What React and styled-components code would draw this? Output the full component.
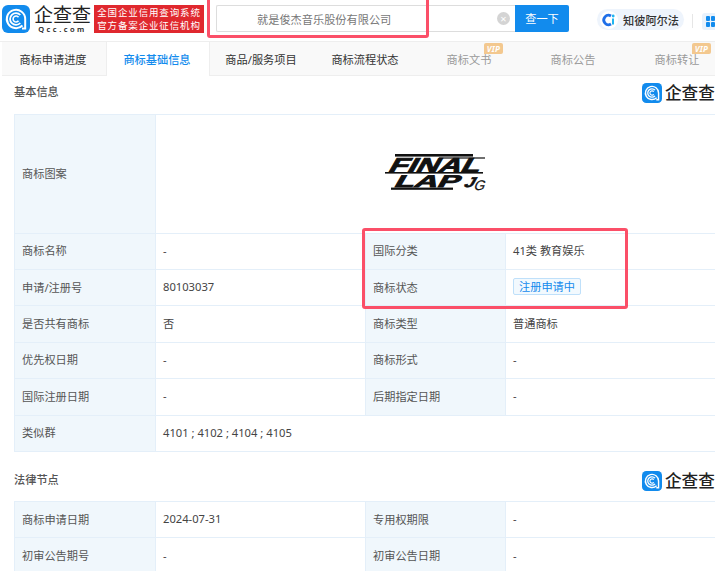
import React from "react";
import styled, { createGlobalStyle } from "styled-components";

const Global = createGlobalStyle`
  html, body {
    margin: 0;
    padding: 0;
    background: #fff;
    font-family: "Noto Sans", "Noto Sans CJK SC", sans-serif;
    font-size: 11.2px;
    color: #333;
  }
`;

const Page = styled.div`
  position: relative;
  width: 715px;
  height: 571px;
  overflow: hidden;
  background: #fff;
`;

const Header = styled.header`
  height: 42px;
  display: flex;
  align-items: flex-start;
  box-sizing: border-box;
  padding: 5px 0 0 2px;
  background: #fff;
  border-bottom: 1px solid #eee;
`;

const Brand = styled.div`
  flex: none;
  display: flex;
  align-items: center;
  gap: 4px;
  width: 92px;
`;

const BrandWords = styled.div`
  display: flex;
  flex-direction: column;
  align-items: center;
`;

const BrandName = styled.span`
  font-size: ${(p) => p.$size || 19}px;
  line-height: ${(p) => (p.$size ? p.$size + 3 : 20)}px;
  color: #222;
  white-space: nowrap;
`;

const BrandSite = styled.span`
  font-size: 7.5px;
  line-height: 8px;
  letter-spacing: 2.5px;
  color: #222;
  font-weight: 600;
`;

const RedTag = styled.div`
  flex: none;
  width: 110px;
  height: 28px;
  box-sizing: border-box;
  padding-top: 1px;
  background: #e0282e;
  color: #fff;
  font-size: 9.5px;
  line-height: 13px;
  text-align: center;
  letter-spacing: 0.85px;
  white-space: nowrap;
`;

const Search = styled.div`
  flex: none;
  margin-left: 12px;
  display: flex;
  height: 27px;
  width: 353px;
`;

const SearchInput = styled.div`
  width: 299px;
  box-sizing: border-box;
  display: flex;
  align-items: center;
  justify-content: space-between;
  padding: 0 5px 0 40px;
  border: 1px solid #ddd;
  border-right: none;
  border-radius: 2px 0 0 2px;
  color: #777;
`;

const ClearIcon = styled.span`
  width: 13px;
  height: 13px;
  border-radius: 50%;
  background: #d4d4d4;
  color: #fff;
  font-size: 11px;
  line-height: 13px;
  text-align: center;
`;

const SearchButton = styled.div`
  width: 54px;
  background: #128bed;
  color: #fff;
  line-height: 27px;
  text-align: center;
  border-radius: 0 2px 2px 0;
`;

const AiPill = styled.div`
  margin: 4px 0 0 28px;
  width: 87px;
  height: 21px;
  flex: none;
  box-sizing: border-box;
  display: flex;
  align-items: center;
  gap: 5px;
  padding-left: 3px;
  border-radius: 11px;
  background: #eef4fc;
  color: #333;
  font-weight: 500;
`;

const Divider = styled.span`
  flex: none;
  width: 1px;
  height: 14px;
  margin: 9px 0 0 8px;
  background: #e6e6e6;
`;

const AppButton = styled.span`
  flex: none;
  width: 24px;
  height: 17px;
  margin: 8px 0 0 9px;
  box-sizing: border-box;
  padding: 3px 4px;
  border-radius: 3px;
  background: #e8f2fc;
  display: grid;
  grid-template-columns: repeat(2, 4px);
  grid-auto-rows: 5px;
  gap: 1px;
`;

const AppCell = styled.i`
  display: block;
  background: #128bed;
  border-radius: 1px;
`;

const Tabs = styled.nav`
  height: 34px;
  margin-left: 2px;
  display: flex;
  width: 740px;
  background: #f9f9f9;
  box-sizing: border-box;
  border-bottom: 1px solid #eee;
`;

const Tab = styled.div`
  position: relative;
  flex: none;
  width: 104px;
  height: ${(p) => (p.$active ? 34 : 33)}px;
  padding-right: 2px;
  line-height: 36px;
  text-align: center;
  box-sizing: border-box;
  background: ${(p) => (p.$active ? "#fff" : "transparent")};
  color: ${(p) => (p.$active ? "#128bed" : p.$off ? "#999" : "#333")};
  font-weight: ${(p) => (p.$active ? 500 : 400)};
  border-left: ${(p) => (p.$active ? "1px solid #eee" : "none")};
  border-right: ${(p) => (p.$active ? "1px solid #eee" : "none")};
`;

const VipTag = styled.span`
  position: absolute;
  left: 66px;
  top: 1px;
  width: 19px;
  height: 11px;
  border-radius: 2px 2px 2px 0;
  background: #f3c88f;
  color: #fff;
  font-size: 8px;
  line-height: 11px;
  font-weight: 700;
  font-style: italic;
  letter-spacing: 0.3px;
`;

const Content = styled.main`
  padding-left: 14px;
`;

const SectionHead = styled.div`
  display: flex;
  justify-content: space-between;
  align-items: flex-start;
  width: 701px;
  height: ${(p) => p.$height}px;
  padding-top: ${(p) => p.$top}px;
  box-sizing: border-box;
  font-weight: 500;
  color: #555;
`;

const Stamp = styled.div`
  display: flex;
  align-items: center;
  gap: 3px;
  width: 73px;
  height: 20px;
  flex: none;
`;

const Table = styled.table`
  border-collapse: collapse;
  table-layout: fixed;
  width: 740px;
`;

const Row = styled.tr`
  height: ${(p) => p.$height || 36.4}px;
`;

const Label = styled.td`
  box-sizing: border-box;
  padding: 0 0 2px 7px;
  background: #f0f7fc;
  border: 1px solid #e4eff9;
  color: #555;
`;

const Value = styled.td`
  box-sizing: border-box;
  padding: 0 0 2px 7px;
  border: 1px solid #e4eff9;
  color: #444;
`;

const MarkCell = styled(Value)`
  padding: 0 0 0 225px;
`;

const StatusTag = styled.span`
  display: inline-block;
  height: 17px;
  line-height: 15px;
  box-sizing: border-box;
  padding: 0 5px;
  border: 1px solid #bfe0fa;
  border-radius: 2px;
  background: #f2f9fe;
  color: #128bed;
`;

const Highlight = styled.div`
  position: absolute;
  left: ${(p) => p.$left}px;
  top: ${(p) => p.$top}px;
  width: ${(p) => p.$width}px;
  height: ${(p) => p.$height}px;
  box-sizing: border-box;
  border: 3px solid #fb4f68;
  border-radius: 3px;
  pointer-events: none;
`;

const QccIcon = ({ size }) => (
  <svg width={size} height={size} viewBox="0 0 28 28" style={{ flex: "none" }}>
    <rect width="28" height="28" rx="6" fill="#128bed" />
    <path d="M20.5 20.5A9.2 9.2 0 1 1 23.2 14V23.5H20" fill="none" stroke="#fff" strokeWidth="2" />
    <path d="M18.3 18A5.9 5.9 0 1 1 18.3 10" fill="none" stroke="#fff" strokeWidth="1.8" />
    <path d="M16.5 15.8A3 3 0 1 1 16.5 12.2" fill="none" stroke="#fff" strokeWidth="1.6" />
  </svg>
);

const AiIcon = () => (
  <svg width="18" height="18" viewBox="0 0 18 18" style={{ flex: "none" }}>
    <circle cx="9" cy="9" r="9" fill="#fff" />
    <path d="M11 5A4.7 4.7 0 1 0 11 13" fill="none" stroke="#1f6fe8" strokeWidth="2.8" />
    <rect x="12" y="7.5" width="2" height="6" fill="#1fb4f0" />
    <circle cx="13.2" cy="5" r="1.4" fill="#1fb4f0" />
  </svg>
);

// the trademark image: wide racing letters with speed bars
const FinalLapMark = () => (
  <svg width="110" height="46" viewBox="0 0 110 46" style={{ display: "block" }}>
    <g fill="#111">
      <rect x="14" y="3" width="78" height="2.6" />
      <rect x="58" y="6.4" width="46" height="1.2" />
      <rect x="4" y="21" width="98" height="1.6" />
      <rect x="10" y="36.6" width="62" height="2.2" />
    </g>
    <g fontFamily="Liberation Sans, sans-serif" fontWeight="700" fill="#111" stroke="#111">
      <text transform="translate(6 20.5) skewX(-30) scale(1.55 1)" fontSize="20" strokeWidth="0.8">FINAL</text>
      <text transform="translate(12 35.5) skewX(-30) scale(1.9 1)" fontSize="17" strokeWidth="0.8">LAP</text>
      <text transform="translate(82 36) skewX(-30) scale(1.3 1)" fontSize="14" strokeWidth="0.5">J</text>
      <text transform="translate(92 39) skewX(-20)" fontSize="14" fontWeight="400" strokeWidth="0.2">G</text>
    </g>
  </svg>
);

const rowsBasic = [
  ["商标名称", "-", "国际分类", "41类 教育娱乐"],
  ["申请/注册号", "80103037", "商标状态", <StatusTag key="s">注册申请中</StatusTag>],
  ["是否共有商标", "否", "商标类型", "普通商标"],
  ["优先权日期", "-", "商标形式", "-"],
  ["国际注册日期", "-", "后期指定日期", "-"],
];

const rowsLegal = [
  ["商标申请日期", "2024-07-31", "专用权期限", "-"],
  ["初审公告期号", "-", "初审公告日期", "-"],
];

const Cols = () => (
  <colgroup>
    <col style={{ width: 141 }} />
    <col style={{ width: 210 }} />
    <col style={{ width: 140 }} />
    <col />
  </colgroup>
);

const QccStamp = () => (
  <Stamp>
    <QccIcon size={20} />
    <BrandName $size={16.6}>企查查</BrandName>
  </Stamp>
);

export default function App() {
  return (
    <Page>
      <Global />
      <Header>
        <Brand>
          <QccIcon size={28} />
          <BrandWords>
            <BrandName>企查查</BrandName>
            <BrandSite>Qcc.com</BrandSite>
          </BrandWords>
        </Brand>
        <RedTag>
          全国企业信用查询系统
          <br />
          官方备案企业征信机构
        </RedTag>
        <Search>
          <SearchInput>
            就是俊杰音乐股份有限公司
            <ClearIcon>×</ClearIcon>
          </SearchInput>
          <SearchButton>查一下</SearchButton>
        </Search>
        <AiPill>
          <AiIcon />
          知彼阿尔法
        </AiPill>
        <Divider />
        <AppButton>
          <AppCell />
          <AppCell />
          <AppCell />
          <AppCell />
        </AppButton>
      </Header>
      <Tabs>
        <Tab>商标申请进度</Tab>
        <Tab $active>商标基础信息</Tab>
        <Tab>商品/服务项目</Tab>
        <Tab>商标流程状态</Tab>
        <Tab $off>
          商标文书
          <VipTag>VIP</VipTag>
        </Tab>
        <Tab $off>商标公告</Tab>
        <Tab $off>
          商标转让
          <VipTag>VIP</VipTag>
        </Tab>
      </Tabs>
      <Content>
        <SectionHead $height={38} $top={7}>
          <span>基本信息</span>
          <QccStamp />
        </SectionHead>
        <Table>
          <Cols />
          <tbody>
            <Row $height={118.6}>
              <Label>商标图案</Label>
              <MarkCell colSpan={3}>
                <FinalLapMark />
              </MarkCell>
            </Row>
            {rowsBasic.map((r) => (
              <Row key={r[0]}>
                <Label>{r[0]}</Label>
                <Value>{r[1]}</Value>
                <Label>{r[2]}</Label>
                <Value>{r[3]}</Value>
              </Row>
            ))}
            <Row>
              <Label>类似群</Label>
              <Value colSpan={3}>4101 ; 4102 ; 4104 ; 4105</Value>
            </Row>
          </tbody>
        </Table>
        <SectionHead $height={49} $top={19}>
          <span>法律节点</span>
          <QccStamp />
        </SectionHead>
        <Table>
          <Cols />
          <tbody>
            {rowsLegal.map((r) => (
              <Row key={r[0]}>
                <Label>{r[0]}</Label>
                <Value>{r[1]}</Value>
                <Label>{r[2]}</Label>
                <Value>{r[3]}</Value>
              </Row>
            ))}
          </tbody>
        </Table>
      </Content>
      <Highlight $left={207} $top={-4} $width={222} $height={42} />
      <Highlight $left={362} $top={228} $width={266} $height={81} />
    </Page>
  );
}
